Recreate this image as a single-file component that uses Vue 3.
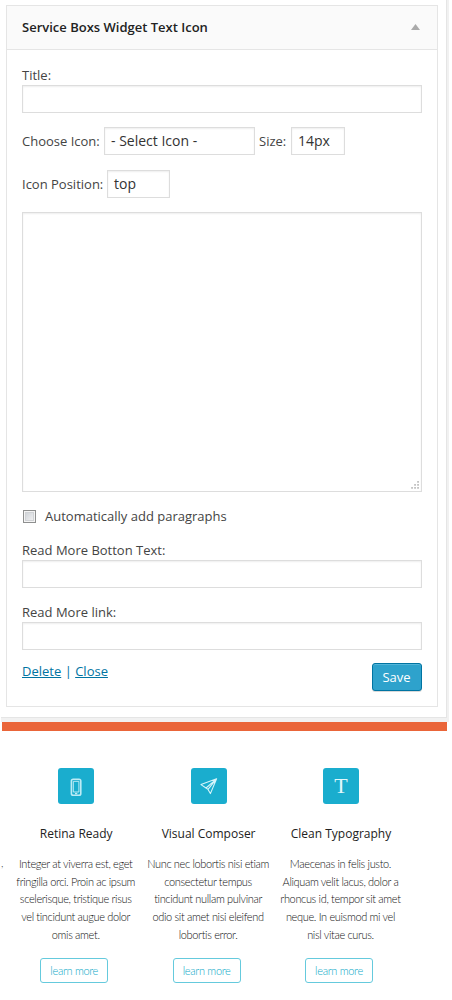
<script setup>
const services = [
  {
    icon: 'phone',
    title: 'Retina Ready',
    lines: ['Integer at viverra est, eget', 'fringilla orci. Proin ac ipsum', 'scelerisque, tristique risus', 'vel tincidunt augue dolor', 'omis amet.'],
  },
  {
    icon: 'plane',
    title: 'Visual Composer',
    lines: ['Nunc nec lobortis nisi etiam', 'consectetur tempus', 'tincidunt nullam pulvinar', 'odio sit amet nisi eleifend', 'lobortis error.'],
  },
  {
    icon: 'type',
    title: 'Clean Typography',
    lines: ['Maecenas in felis justo.', 'Aliquam velit lacus, dolor a', 'rhoncus id, tempor sit amet', 'neque. In euismod mi vel', 'nisl vitae curus.'],
  },
]
</script>

<template>
  <div class="page">
    <div class="sidebar">
      <section class="widget">
        <header class="head">
          <h4>Service Boxs Widget Text Icon</h4>
          <svg class="arrow" width="9" height="6" viewBox="0 0 9 6"><path d="M4.5 0 9 6H0z" fill="#aaa" /></svg>
        </header>
        <div class="body">
          <label class="lbl">Title:</label>
          <div class="field"></div>
          <div class="row row-icon">
            <label>Choose Icon:</label>
            <div class="field select">- Select Icon -</div>
            <label class="size-label">Size:</label>
            <div class="field size">14px</div>
          </div>
          <div class="row row-pos">
            <label>Icon Position:</label>
            <div class="field pos">top</div>
          </div>
          <div class="field area">
            <svg class="grip" width="8" height="8" viewBox="0 0 8 8" fill="#b4b4b4">
              <path d="M6.3 0h1.5v1.7H6.3zM3.3 3h1.5v1.7H3.3zM6.3 3h1.5v1.7H6.3zM.3 6h1.5v1.7H.3zM3.3 6h1.5v1.7H3.3zM6.3 6h1.5v1.7H6.3z" />
            </svg>
          </div>
          <div class="check-row"><span class="check"></span><label>Automatically add paragraphs</label></div>
          <label class="lbl more-text">Read More Botton Text:</label>
          <div class="field"></div>
          <label class="lbl more-link">Read More link:</label>
          <div class="field"></div>
          <div class="actions">
            <div class="links"><a>Delete</a> | <a>Close</a></div>
            <button class="save">Save</button>
          </div>
        </div>
      </section>
    </div>
    <div class="bar"></div>
    <section class="services">
      <span class="cut">,</span>
      <article v-for="s in services" :key="s.title" class="service">
        <div class="tile">
          <svg v-if="s.icon === 'phone'" width="36" height="36" viewBox="0 0 36 36" fill="none" stroke="#bdebf5">
            <rect x="13.4" y="11.2" width="9.4" height="16" rx="1.8" stroke-width="1.6" />
            <path d="M15.3 13.3h5.6v10.7h-5.6z" stroke-width="1" />
            <path d="M17 25.6h2.3" stroke-width="1.4" />
          </svg>
          <svg v-else-if="s.icon === 'plane'" width="36" height="36" viewBox="0 0 36 36" fill="none" stroke="#d5f4fa" stroke-width="1.1" stroke-linejoin="round">
            <path d="M25.6 10.8 10 16.6l5 3.4zM25.6 10.8l-6.2 14.8-2.4-4.2zM25.6 10.8 15 20l2 1.4z" />
          </svg>
          <span v-else class="letter">T</span>
        </div>
        <h3>{{ s.title }}</h3>
        <p><span v-for="l in s.lines" :key="l">{{ l }}</span></p>
        <a class="learn">learn more</a>
      </article>
    </section>
  </div>
</template>

<style>
body { background: #fff; }
</style>
<style scoped>
* { box-sizing: border-box; }
.page { width: 452px; height: 1000px; overflow: hidden; font: 13px/18px "Open Sans", sans-serif; color: #444; background: #fff; }
.sidebar { width: 449px; height: 722px; padding: 5px 0 0 6px; background: linear-gradient(#e5e5e5, #e5e5e5) 446px 0 / 1px 718px no-repeat, linear-gradient(#e5e5e5, #e5e5e5) 1px 717px / 446px 1px no-repeat, linear-gradient(#f1f1f1, #f1f1f1) 447px 0 / 2px 722px no-repeat, linear-gradient(#f1f1f1, #f1f1f1) 1px 718px / 448px 4px no-repeat; }
.widget { width: 432px; height: 702px; border: 1px solid #e5e5e5; background: #fff; }
.head { height: 44px; display: flex; align-items: center; justify-content: space-between; padding: 0 17px 2px 15px; background: #fafafa; border-bottom: 1px solid #e5e5e5; }
h4 { margin: 0; font-size: 13px; font-weight: 600; color: #222; white-space: nowrap; }
.body { padding: 16px 15px 0; }
.lbl { display: block; height: 19px; }
.field { height: 28px; border: 1px solid #ddd; background: #fff; box-shadow: inset 0 1px 2px rgba(0, 0, 0, .07); font-size: 14px; line-height: 26px; padding: 0 6px; color: #333; white-space: nowrap; }
.row { display: flex; align-items: center; white-space: nowrap; }
.row-icon { margin-top: 14px; }
.row-pos { margin-top: 15px; }
.row label:first-child { width: 82px; }
.row-pos label:first-child { width: 85px; }
.select { width: 151px; }
.size-label { width: 36px; padding-left: 4px; }
.size { width: 54px; }
.pos { width: 63px; }
.area { height: 280px; margin-top: 14px; display: flex; align-items: flex-end; justify-content: flex-end; padding: 0 2px 2px 0; }
.check-row { display: flex; align-items: center; height: 18px; margin-top: 15px; padding-left: 1px; }
.check { width: 13px; height: 13px; margin-right: 9px; border: 1px solid #8e8f8f; background: linear-gradient(135deg, #c9cdd3, #f6f6f6); box-shadow: inset 0 0 0 1px #f4f4f4, inset 0 0 0 2px #d0d2d5; }
.more-text { margin-top: 16px; }
.more-link { margin-top: 15px; }
.actions { display: flex; justify-content: space-between; align-items: flex-start; margin-top: 12px; color: #0074a2; }
.links a { text-decoration: underline; color: #0074a2; }
.save { width: 50px; height: 28px; margin-top: 1px; padding: 0 1px 0 0; border: 1px solid #0074a2; border-radius: 3px; background: #2ea2cc; box-shadow: inset 0 1px 0 rgba(120, 200, 230, .5), 0 1px 0 rgba(0, 0, 0, .15); color: #fff; font: 13px/26px "Open Sans", sans-serif; }
.bar { width: 445px; height: 9px; margin-left: 2px; background: #ea6539; }
.services { position: relative; display: flex; padding: 37px 0 0 10px; }
.cut { position: absolute; left: 1px; top: 123px; font: 300 11px/18px Lato, sans-serif; color: #333; }
.service { width: 132.4px; display: flex; flex-direction: column; align-items: center; white-space: nowrap; }
.tile { width: 36px; height: 36px; border-radius: 3px; background: #1aadce; display: flex; align-items: center; justify-content: center; }
.letter { font: 22px/36px "Liberation Serif", serif; color: #e2f8fc; }
h3 { margin: 20px 0 0; font: 12px/20px "Open Sans", sans-serif; color: #222; }
p { margin: 11px 0 0 -1px; font: 300 11px/17.7px Lato, sans-serif; letter-spacing: -.35px; color: #111; text-align: center; }
p span { display: block; }
.learn { width: 68px; height: 25px; margin: 14px 0 0 -4px; border: 1px solid #65cadd; border-radius: 3px; font: 300 11px/23px Lato, sans-serif; letter-spacing: -.3px; color: #0aa9c8; text-align: center; }
</style>
